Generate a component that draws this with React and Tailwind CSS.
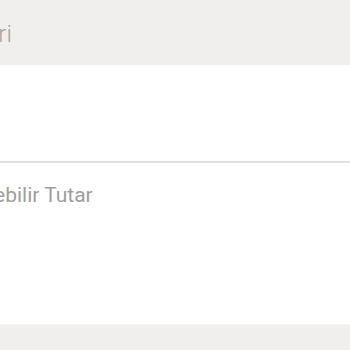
export default function App() {
  return (
    <div className="w-[350px] h-[350px] overflow-hidden bg-white" style={{ fontFamily: "Roboto, 'Noto Sans', sans-serif" }}>
      <div className="h-[65px] bg-[#f1efee] flex items-center">
        <span className="ml-[-141px] text-[24px] font-light text-[#a3a3a3] whitespace-nowrap leading-none pt-[2px]">Sipariş Bilgileri</span>
      </div>
      <div className="h-[96px]"></div>
      <div className="h-[2px] bg-[#e0e0e0]"></div>
      <div className="pt-[22px] h-[161px]">
        <span className="block ml-[-55px] text-[21px] text-[#9e9e9e] whitespace-nowrap leading-none">Ödenebilir Tutar</span>
      </div>
      <div className="h-px bg-[#f5f4f3]"></div>
      <div className="h-[26px] bg-[#f1efee]"></div>
    </div>
  );
}
